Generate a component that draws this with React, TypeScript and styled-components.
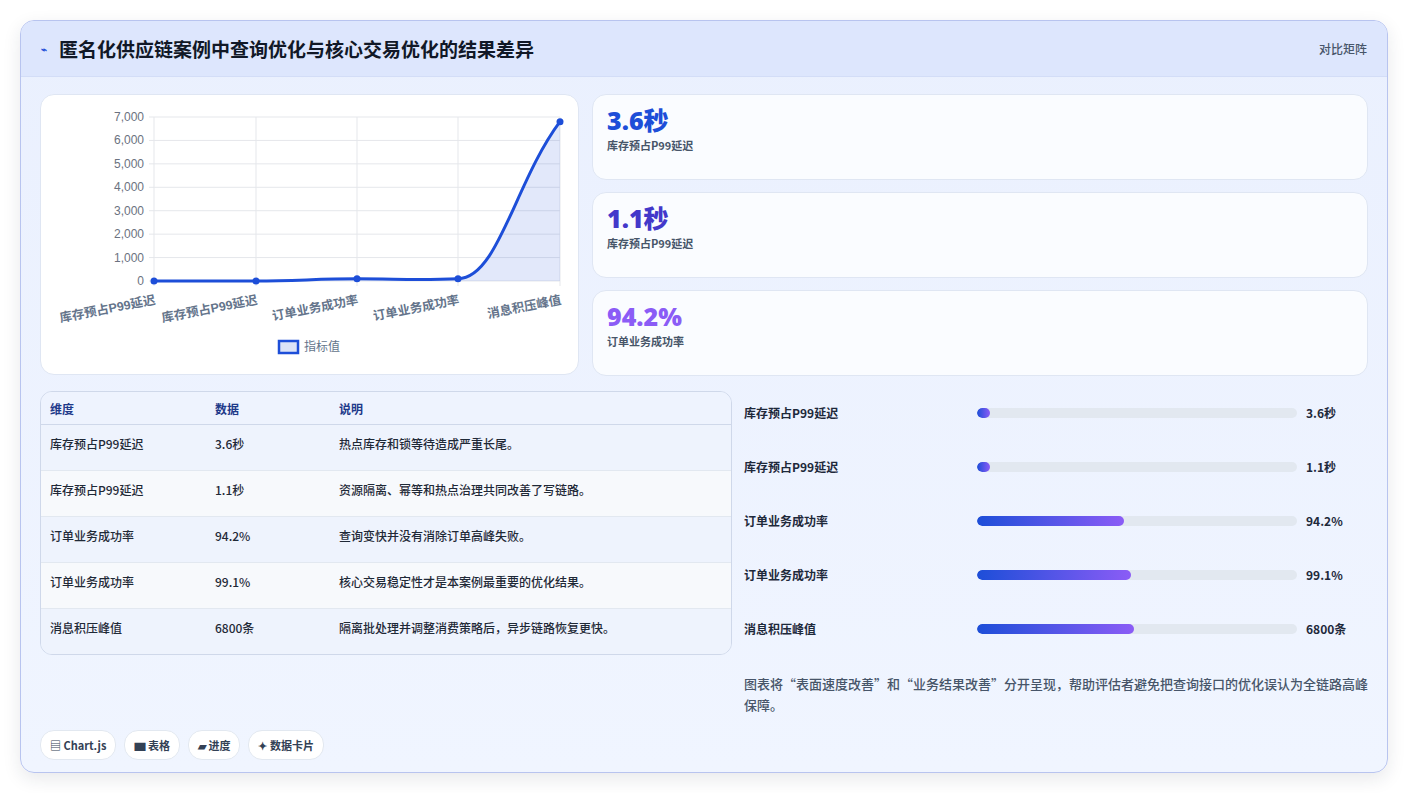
import React from "react";
import styled, { createGlobalStyle } from "styled-components";

const Global = createGlobalStyle`
  html, body { margin: 0; background: #ffffff; }
  body { font-family: "Noto Sans CJK SC", "Noto Sans", sans-serif; color: #1e293b; }
`;

const Page = styled.div`
  padding: 20px 20px 20px 20px;
`;
const Card = styled.div`
  width: 1368px; height: 753px; box-sizing: border-box;
  border: 1px solid #b8c4ef; border-radius: 14px; overflow: hidden;
  background: linear-gradient(180deg, #eaf0fe 0%, #f0f5ff 100%);
  box-shadow: 0 6px 18px rgba(30,41,59,0.1);
  display: flex; flex-direction: column;
`;
const Header = styled.div`
  height: 55px; flex: none; display: flex; align-items: center; justify-content: space-between;
  padding: 0 20px; background: #dde6fd; border-bottom: 1px solid #d3ddf7;
`;
const Title = styled.h1`
  margin: 0; font-size: 19px; font-weight: 700; color: #111827; display: flex; align-items: center; gap: 12px;
`;
const Small = styled.span`font-size: 12px; color: #475569; font-weight: 500;`;
const Body = styled.div`
  padding: 17px 19px 22px 19px; display: flex; flex-direction: column; gap: 15px; flex: 1;
`;
const Row = styled.div`display: grid; grid-template-columns: 539px 1fr; gap: 13px;`;
const White = styled.div`
  background: #fff; border: 1px solid #dfe6f3; border-radius: 14px;
`;
const ChartBox = styled(White)`height: 281px; box-sizing: border-box;`;
const Stats = styled.div`display: flex; flex-direction: column; gap: 12px;`;
const Stat = styled(White)`
  height: 86px; box-sizing: border-box; padding: 9px 14px; background: #fafcff;
`;
const StatNum = styled.div<{ c: string }>`
  font-size: 25px; font-weight: 800; line-height: 32px; color: ${p => p.c}; font-family: "Open Sans","Noto Sans CJK SC",sans-serif;
`;
const StatLabel = styled.div`font-size: 11px; color: #475569; font-weight: 600; margin-top: 1px;`;
const Lower = styled.div`display: grid; grid-template-columns: 692px 1fr; gap: 12px;`;
const Table = styled.table`
  width: 692px; border-collapse: separate; border-spacing: 0;
  border: 1px solid #cfd8ea; border-radius: 12px; overflow: hidden; font-size: 12px; align-self: start;
`;
const Th = styled.th`
  text-align: left; font-weight: 600; color: #1e3a8a; height: 32px; padding: 0 9px;
  background: #eef3fe; border-bottom: 1px solid #cfd8ea;
`;
const Tr = styled.tr<{ alt: boolean }>`
  background: ${p => (p.alt ? "#f7f9fc" : "#eef3fd")};
  & td { border-bottom: 1px solid #e2e8f0; }
  &:last-child td { border-bottom: none; }
`;
const Td = styled.td`
  height: 36px; padding: 0 9px 9px; color: #1f2937; font-weight: 500; vertical-align: middle;
`;
const Bars = styled.div`display: flex; flex-direction: column; padding-top: 12px;`;
const BarRow = styled.div`
  height: 54px; display: grid; grid-template-columns: 224px 320px 1fr; align-items: start; gap: 9px;
  padding-top: 2px; box-sizing: border-box;
`;
const BarLabel = styled.div`font-size: 12px; font-weight: 600; color: #1e293b; line-height: 16px;`;
const Track = styled.div`height: 10px; background: #e2e8f0; border-radius: 5px; margin-top: 3px; overflow: hidden;`;
const Fill = styled.div`height: 100%; border-radius: 5px; background: linear-gradient(90deg, #1d4ed8, #8b5cf6);`;
const BarVal = styled.div`font-size: 12px; font-weight: 700; color: #1e293b; line-height: 16px;`;
const Note = styled.p`
  margin: 0; font-size: 13px; line-height: 21px; color: #475569; font-weight: 500; max-width: 645px;
`;
const Tags = styled.div`display: flex; gap: 8px; margin-top: auto;`;
const Tag = styled.span`
  font-size: 11px; font-weight: 600; color: #334155; background: #fff; border: 1px solid #e2e8f0;
  border-radius: 14px; padding: 6px 9px;
`;

const vals = [3.6, 1.1, 94.2, 99.1, 6800];
const labels = ["库存预占P99延迟", "库存预占P99延迟", "订单业务成功率", "订单业务成功率", "消息积压峰值"];
const Y = (v: number) => 186 - (v / 7000) * 164;
const xs = [113, 215, 316, 417, 519];

function Chart() {
  const pts = vals.map((v, i) => [xs[i], Y(v)]);
  const line = `M${pts[0][0]},${pts[0][1]} L${pts[1][0]},${pts[1][1]} C${pts[1][0] + 40},${pts[1][1]} ${pts[2][0] - 40},${pts[2][1]} ${pts[2][0]},${pts[2][1]} C${pts[2][0] + 40},${pts[2][1]} ${pts[3][0] - 40},${pts[3][1] + 2} ${pts[3][0]},${pts[3][1]} C${pts[3][0] + 40},${pts[3][1]} ${pts[4][0] - 45},${pts[4][1] + 60} ${pts[4][0]},${pts[4][1]}`;
  return (
    <svg width="539" height="281" style={{ display: "block" }} fontFamily="Liberation Sans, Noto Sans CJK SC, sans-serif">
      {[0, 1000, 2000, 3000, 4000, 5000, 6000, 7000].map(v => (
        <g key={v}>
          <line x1={108} x2={519} y1={Y(v)} y2={Y(v)} stroke="#e5e7eb" />
          <text x={103} y={Y(v) + 4} fontSize="12" fill="#6b7280" textAnchor="end">{v.toLocaleString("en-US")}</text>
        </g>
      ))}
      {xs.map(x => <line key={x} x1={x} x2={x} y1={22} y2={191} stroke="#e5e7eb" />)}
      <path d={line + ` L519,186 L113,186 Z`} fill="rgba(29,78,216,0.13)" />
      <path d={line} fill="none" stroke="#1d4ed8" strokeWidth="3" />
      {pts.map((p, i) => <circle key={i} cx={p[0]} cy={p[1]} r="3.5" fill="#1d4ed8" />)}
      {labels.map((l, i) => (
        <text key={i} transform={`translate(${xs[i]},199) rotate(-11)`} textAnchor="end" fontSize="12.5" fontWeight="600" fill="#64748b" dy="10">{l}</text>
      ))}
      <rect x="238" y="246" width="19" height="12" fill="#dbe3f7" stroke="#1d4ed8" strokeWidth="2.5" />
      <text x="263" y="256" fontSize="12" fill="#64748b">指标值</text>
    </svg>
  );
}

export default function App() {
  const rows = [
    ["库存预占P99延迟", "3.6秒", "热点库存和锁等待造成严重长尾。"],
    ["库存预占P99延迟", "1.1秒", "资源隔离、幂等和热点治理共同改善了写链路。"],
    ["订单业务成功率", "94.2%", "查询变快并没有消除订单高峰失败。"],
    ["订单业务成功率", "99.1%", "核心交易稳定性才是本案例最重要的优化结果。"],
    ["消息积压峰值", "6800条", "隔离批处理并调整消费策略后，异步链路恢复更快。"],
  ];
  const widths = [4, 4, 46, 48, 49];
  return (
    <Page>
      <Global />
      <Card>
        <Header>
          <Title><span style={{ fontSize: 10, color: "#1d4ed8" }}>⌁</span>匿名化供应链案例中查询优化与核心交易优化的结果差异</Title>
          <Small>对比矩阵</Small>
        </Header>
        <Body>
          <Row>
            <ChartBox><Chart /></ChartBox>
            <Stats>
              <Stat><StatNum c="#1d4ed8">3.6秒</StatNum><StatLabel>库存预占P99延迟</StatLabel></Stat>
              <Stat><StatNum c="#4338ca">1.1秒</StatNum><StatLabel>库存预占P99延迟</StatLabel></Stat>
              <Stat><StatNum c="#8b5cf6">94.2%</StatNum><StatLabel>订单业务成功率</StatLabel></Stat>
            </Stats>
          </Row>
          <Lower>
            <Table>
              <thead><tr><Th style={{ width: 147 }}>维度</Th><Th style={{ width: 106 }}>数据</Th><Th>说明</Th></tr></thead>
              <tbody>
                {rows.map((r, i) => (
                  <Tr key={i} alt={i % 2 === 1}><Td>{r[0]}</Td><Td>{r[1]}</Td><Td>{r[2]}</Td></Tr>
                ))}
              </tbody>
            </Table>
            <div>
              <Bars>
                {rows.map((r, i) => (
                  <BarRow key={i}>
                    <BarLabel>{r[0]}</BarLabel>
                    <Track><Fill style={{ width: `${widths[i]}%`, minWidth: 10 }} /></Track>
                    <BarVal>{r[1]}</BarVal>
                  </BarRow>
                ))}
              </Bars>
              <Note>图表将“表面速度改善”和“业务结果改善”分开呈现，帮助评估者避免把查询接口的优化误认为全链路高峰保障。</Note>
            </div>
          </Lower>
          <Tags>
            <Tag>▤ Chart.js</Tag><Tag>▆ 表格</Tag><Tag>▰ 进度</Tag><Tag>✦ 数据卡片</Tag>
          </Tags>
        </Body>
      </Card>
    </Page>
  );
}
